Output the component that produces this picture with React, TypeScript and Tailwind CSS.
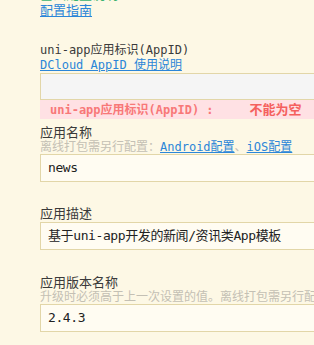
import React from "react";

const font = {
  fontFamily: '"DejaVu Sans Mono", "Noto Sans CJK SC", monospace',
};

const Field = ({
  label,
  desc,
  value,
  className = "",
}: {
  label: string;
  desc?: React.ReactNode;
  value: string;
  className?: string;
}) => (
  <div className={className}>
    <div className="text-[13px] leading-[16px] text-[#3a3a3a]">{label}</div>
    {desc && (
      <div className="whitespace-nowrap text-[12px] leading-[13px] text-[#c4c0b4]">
        {desc}
      </div>
    )}
    <div className="flex h-[28px] w-[400px] items-center border border-[#e2d6a8] bg-[#fffcf2] px-[7px] text-[13px] tracking-[-0.4px] text-[#222]">
      {value}
    </div>
  </div>
);

const App = () => {
  return (
    <div
      className="h-[345px] w-[314px] overflow-hidden bg-[#fdf8e5] pl-[40px]"
      style={font}
    >
      <div className="-mt-[12px] h-[14px] overflow-hidden text-[13px] leading-[14px] text-[#3cb371]">
        基础配置说明
      </div>
      <a className="mt-[1px] block w-fit text-[13px] leading-[16px] text-[#2b86d8] underline">
        配置指南
      </a>

      <div className="mt-[24px]">
        <div className="text-[12px] leading-[15px] text-[#3a3a3a]">
          uni-app应用标识(AppID)
        </div>
        <a className="block w-fit text-[12px] leading-[14px] text-[#2b86d8] underline">
          DCloud AppID 使用说明
        </a>
        <div className="mt-[1px] h-[27px] w-[400px] border border-[#e2d6a8] bg-[#f5f5f5]" />
        <div className="flex h-[19px] w-[400px] items-center bg-[#ffe1e4] pl-[10px] text-[12px] font-bold text-[#f87878]">
          <span>uni-app应用标识(AppID) :</span>
          <span className="ml-[36px] text-[13px] text-[#f5605d]">不能为空</span>
        </div>
      </div>

      <Field
        className="mt-[6px]"
        label="应用名称"
        desc={
          <>
            离线打包需另行配置：
            <a className="text-[#2b86d8] underline">Android配置</a>
            <span>、</span>
            <a className="text-[#2b86d8] underline">iOS配置</a>
          </>
        }
        value="news"
      />

      <Field
        className="mt-[24px]"
        label="应用描述"
        value="基于uni-app开发的新闻/资讯类App模板"
      />

      <Field
        className="mt-[25px]"
        label="应用版本名称"
        desc="升级时必须高于上一次设置的值。离线打包需另行配置"
        value="2.4.3"
      />
    </div>
  );
};

export default App;
